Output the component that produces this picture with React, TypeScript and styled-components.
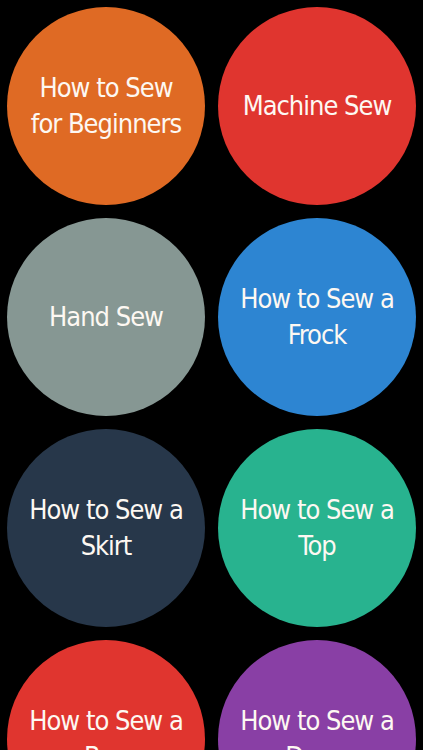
import * as React from "react";
import styled, { createGlobalStyle } from "styled-components";

const GlobalStyle = createGlobalStyle`
  html, body {
    margin: 0;
    padding: 0;
    background: #000;
  }
  body {
    font-family: "DejaVu Sans Condensed", "Liberation Sans", sans-serif;
  }
`;

const Screen = styled.div`
  width: 423px;
  height: 750px;
  overflow: hidden;
  background: #000;
`;

const Grid = styled.div`
  display: grid;
  grid-template-columns: repeat(2, 198px);
  gap: 13px;
  padding: 7px;
`;

const Circle = styled.button<{ $bg: string }>`
  width: 198px;
  height: 198px;
  border: none;
  border-radius: 50%;
  background: ${p => p.$bg};
  color: #fdf8f2;
  display: flex;
  flex-direction: column;
  align-items: center;
  justify-content: center;
  padding: 0;
  font-family: inherit;
  font-size: 27px;
  letter-spacing: -1px;
  line-height: 36px;
  text-align: center;
  cursor: pointer;
`;

const Line = styled.span`
  display: block;
  white-space: nowrap;
`;

interface ITopic {
  lines: string[];
  color: string;
}

const topics: ITopic[] = [
  { lines: ["How to Sew", "for Beginners"], color: "#df6a24" },
  { lines: ["Machine Sew"], color: "#e0352f" },
  { lines: ["Hand Sew"], color: "#869793" },
  { lines: ["How to Sew a", "Frock"], color: "#2d85d2" },
  { lines: ["How to Sew a", "Skirt"], color: "#27374a" },
  { lines: ["How to Sew a", "Top"], color: "#28b38f" },
  { lines: ["How to Sew a", "Bag"], color: "#e0352f" },
  { lines: ["How to Sew a", "Dress"], color: "#893fa5" },
];

export const App: React.FC = () => {
  return (
    <Screen>
      <GlobalStyle />
      <Grid>
        {topics.map((t, i) => (
          <Circle key={i} $bg={t.color}>
            {t.lines.map(l => (
              <Line key={l}>{l}</Line>
            ))}
          </Circle>
        ))}
      </Grid>
    </Screen>
  );
};

export default App;
